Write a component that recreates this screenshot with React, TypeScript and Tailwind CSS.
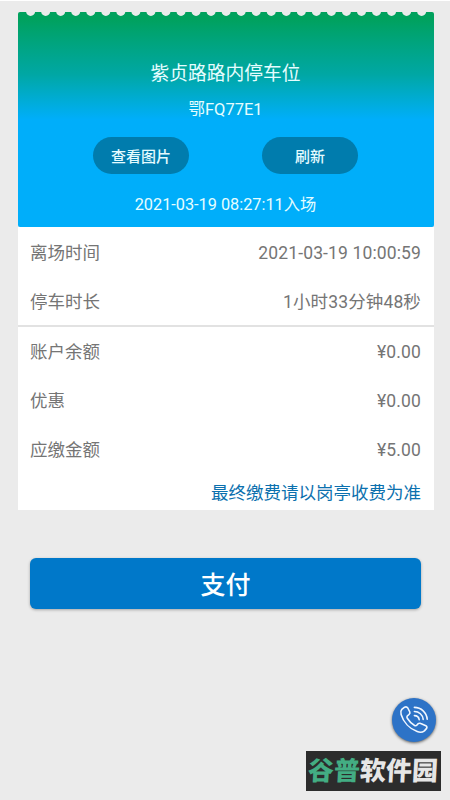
import { ReactNode } from 'react';

interface RowProps {
  label: string;
  children: ReactNode;
}

const timeRows = [
  { label: '离场时间', value: '2021-03-19 10:00:59' },
  { label: '停车时长', value: '1小时33分钟48秒' },
];

const amountRows = [
  { label: '账户余额', value: '¥0.00' },
  { label: '优惠', value: '¥0.00' },
  { label: '应缴金额', value: '¥5.00' },
];

const notches = Array.from({ length: 27 }, (_, i) => 12.6 + i * 15.04);

const Row = ({ label, children }: RowProps) => (
  <div className="flex h-[49px] items-center justify-between pt-[3px]">
    <span>{label}</span>
    <span className="tracking-[0.13px]">{children}</span>
  </div>
);

const PillButton = ({ children }: { children: ReactNode }) => (
  <button className="flex h-[37px] w-[96px] items-center justify-center rounded-full bg-[#007cad] pt-[3px] text-[15px] font-medium text-[#e4fbff]">
    {children}
  </button>
);

const TicketHeader = () => (
  <section className="relative flex h-[215px] flex-col items-center rounded-[2px] bg-linear-to-b from-[#00a15d] from-3% via-[#00a7a4] via-29% to-[#00aefa] to-50% text-[#e6fdff]">
    {/* torn ticket edge */}
    <svg className="absolute left-0 top-0 h-[5px] w-full" viewBox="0 0 416 5">
      {notches.map((x) => (
        <circle key={x} cx={x} cy="-0.6" r="4.5" fill="#ebebeb" />
      ))}
    </svg>
    <h1 className="mt-[48px] text-[18.75px] leading-[28px]">紫贞路路内停车位</h1>
    <p className="mt-[10px] text-[16.5px] leading-[24px]">鄂FQ77E1</p>
    <div className="mt-[15px] flex gap-[73px]">
      <PillButton>查看图片</PillButton>
      <PillButton>刷新</PillButton>
    </div>
    <p className="mt-[19px] text-[16.3px] leading-[24px]">2021-03-19 08:27:11入场</p>
  </section>
);

const App = () => {
  return (
    <div className="relative h-[800px] w-[450px] overflow-hidden border-t border-white bg-[#ebebeb] font-[Roboto,'Noto_Sans_CJK_SC',sans-serif]">
      <main className="ml-[17.5px] mt-[11px] w-[416px]">
        <TicketHeader />
        <section className="h-[283px] bg-white text-[17.5px] text-[#757575]">
          <div className="border-b-2 border-[#e2e2e2] px-[12.5px]">
            {timeRows.map((row) => (
              <Row key={row.label} label={row.label}>{row.value}</Row>
            ))}
          </div>
          <div className="-mt-px px-[12.5px]">
            {amountRows.map((row) => (
              <Row key={row.label} label={row.label}>{row.value}</Row>
            ))}
            <p className="mt-[6px] text-right leading-[28px] text-[#0b70ae]">最终缴费请以岗亭收费为准</p>
          </div>
        </section>
        <button className="mx-[12.5px] mt-[48px] flex h-[51px] w-[391px] items-center justify-center rounded-[6px] bg-[#0078c9] pt-[4px] text-[25px] font-medium text-white shadow-[0_1px_3px_rgba(0,0,0,0.3)]">
          支付
        </button>
      </main>

      <button
        aria-label="电话"
        className="absolute left-[392px] top-[697px] flex h-[44px] w-[44px] items-center justify-center rounded-full bg-[#2d73c7] shadow-[0_1px_3px_rgba(0,0,0,0.6)]"
      >
        <svg className="h-[44px] w-[44px]" viewBox="0 0 44 44" fill="none" stroke="#f1f7ff" strokeWidth="1.6" strokeLinecap="round" strokeLinejoin="round">
          <path d="M9.8 11.4L12.6 9.2Q14.6 8.2 15.8 10L17.8 14Q18.3 15.4 17 16.5L15.4 17.8Q14.4 18.9 15.3 20.3C17.3 23.5 19.6 25.9 22.6 27.5Q24 28.2 25 27L26.1 25.7Q27.3 24.8 28.8 25.5L33.8 27.7Q35.5 28.8 34.6 30.4L32.4 32.9Q29.4 35.2 25.2 33.6C17.6 30.8 11.4 24 9.1 16.4Q8.2 13.2 9.8 11.4Z" />
          <path d="M22.4 9.4C29.2 9.4 34.7 14.6 35.2 21.2M22.4 13.5C27 13.5 30.8 16.9 31.2 21.4M22.4 17.6C24.9 17.6 26.8 19.4 27.2 21.6" />
        </svg>
      </button>

      <div className="absolute left-[306px] top-[750px] flex h-[40px] w-[135px] items-center justify-center bg-[#2c2c2c] text-[26px] leading-none font-black">
        <span className="-skew-x-3 whitespace-nowrap text-[#e6e6e6]">
          <span className="text-[#43ad83]">谷普</span>软件园
        </span>
      </div>
    </div>
  );
};

export default App;
